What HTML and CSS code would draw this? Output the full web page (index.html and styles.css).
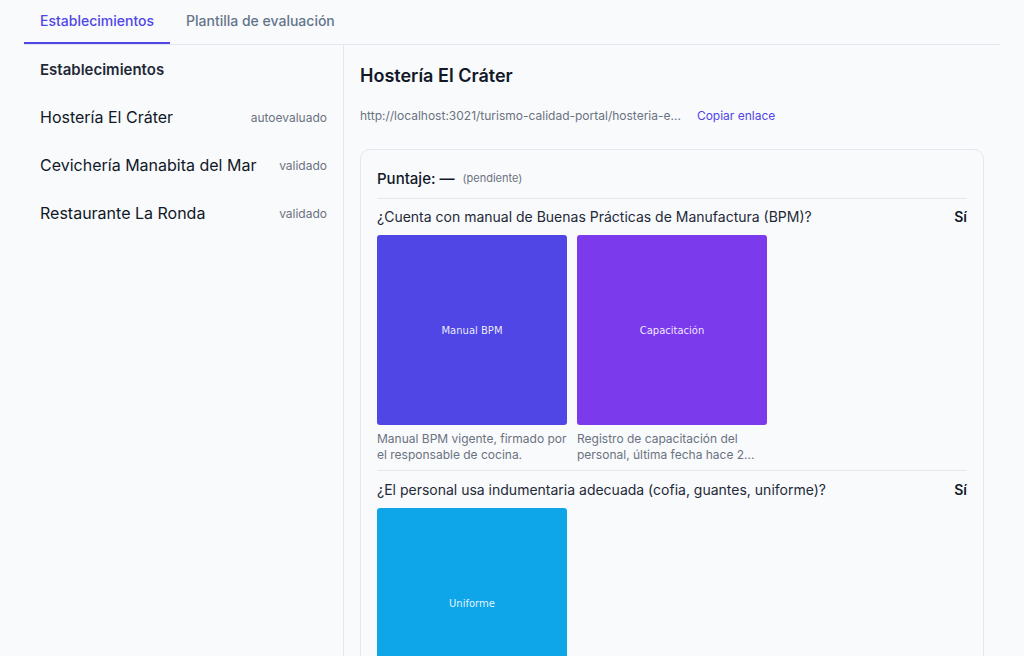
FILE: index.html
```html
<!DOCTYPE html>
<html lang="es">
<head>
  <meta charset="UTF-8" />
  <meta name="viewport" content="width=device-width, initial-scale=1.0"/>
  <title>Turismo Calidad - Establecimientos</title>
  <link rel="stylesheet" href="styles.css">
</head>
<body>

  <nav class="tabs">
    <a class="tab active">Establecimientos</a>
    <a class="tab">Plantilla de evaluación</a>
  </nav>

  <div class="layout">
    <aside class="sidebar">
      <h3>Establecimientos</h3>
      <ul class="list">
        <li><span class="name">Hostería El Cráter</span><span class="status">autoevaluado</span></li>
        <li><span class="name">Cevichería Manabita del Mar</span><span class="status">validado</span></li>
        <li><span class="name">Restaurante La Ronda</span><span class="status">validado</span></li>
      </ul>
    </aside>

    <main class="detail">
      <h2>Hostería El Cráter</h2>
      <div class="link-row">
        <span class="url">http://localhost:3021/turismo-calidad-portal/hosteria-e...</span>
        <a class="copy">Copiar enlace</a>
      </div>

      <section class="card">
        <div class="score">Puntaje: — <span class="pending">(pendiente)</span></div>

        <div class="question">
          <div class="q-head">
            <span>¿Cuenta con manual de Buenas Prácticas de Manufactura (BPM)?</span>
            <strong>Sí</strong>
          </div>
          <div class="evidence">
            <figure>
              <div class="thumb indigo">Manual BPM</div>
              <figcaption>Manual BPM vigente, firmado por el responsable de cocina.</figcaption>
            </figure>
            <figure>
              <div class="thumb violet">Capacitación</div>
              <figcaption>Registro de capacitación del personal, última fecha hace 2...</figcaption>
            </figure>
          </div>
        </div>

        <div class="question">
          <div class="q-head">
            <span>¿El personal usa indumentaria adecuada (cofia, guantes, uniforme)?</span>
            <strong>Sí</strong>
          </div>
          <div class="evidence">
            <figure>
              <div class="thumb sky">Uniforme</div>
            </figure>
          </div>
        </div>
      </section>
    </main>
  </div>

</body>
</html>
```

FILE: styles.css
```css
body {
  font-family: 'Inter', sans-serif;
  margin: 0;
  background-color: #f8fafc;
  color: #111827;
  overflow: hidden;
}

.tabs {
  display: flex;
  margin: 0 24px;
  border-bottom: 1px solid #e2e8f0;
  height: 44px;
}

.tab {
  padding: 0 16px;
  font-size: 14px;
  font-weight: 500;
  color: #64748b;
  line-height: 42px;
  border-bottom: 2px solid transparent;
}

.tab.active {
  color: #4f46e5;
  border-bottom-color: #4f46e5;
}

.layout {
  display: flex;
  margin: 0 24px;
  height: 611px;
}

.sidebar {
  width: 320px;
  border-right: 1px solid #e2e8f0;
  padding: 14px 16px 0;
  box-sizing: border-box;
}

.sidebar h3 {
  margin: 0 0 12px;
  font-size: 15px;
  font-weight: 600;
  color: #1f2937;
  line-height: 22px;
}

.list {
  list-style: none;
  margin: 0;
  padding: 0;
}

.list li {
  display: flex;
  justify-content: space-between;
  align-items: center;
  height: 48px;
}

.name {
  font-size: 16px;
  color: #111827;
}

.status {
  font-size: 12px;
  color: #6b7280;
}

.detail {
  flex: 1;
  padding: 0 16px;
}

.detail h2 {
  margin: 19px 0 0;
  font-size: 18px;
  font-weight: 600;
  line-height: 24px;
}

.link-row {
  display: flex;
  gap: 16px;
  font-size: 12px;
  margin-top: 20px;
  line-height: 16px;
}

.url {
  color: #6b7280;
}

.copy {
  color: #4f46e5;
}

.card {
  margin-top: 25px;
  border: 1px solid #e2e8f0;
  border-radius: 10px;
  padding: 16px 16px 0;
  height: 600px;
}

.score {
  font-size: 15px;
  font-weight: 500;
  line-height: 24px;
  padding-bottom: 7px;
}

.pending {
  font-size: 11px;
  font-weight: 400;
  color: #6b7280;
  margin-left: 4px;
  vertical-align: 2px;
}

.question {
  border-top: 1px solid #e5e7eb;
  padding: 8px 0 7px;
}

.q-head {
  display: flex;
  justify-content: space-between;
  font-size: 14px;
  color: #1f2937;
  line-height: 20px;
  margin-bottom: 8px;
}

.q-head strong {
  font-weight: 600;
  color: #111827;
}

.evidence {
  display: flex;
  gap: 10px;
}

figure {
  margin: 0;
  width: 190px;
}

.thumb {
  height: 190px;
  border-radius: 3px;
  display: flex;
  align-items: center;
  justify-content: center;
  font-family: 'DejaVu Sans', sans-serif;
  font-size: 10px;
  color: rgba(255, 255, 255, 0.9);
}

.indigo {
  background-color: #4f46e5;
}

.violet {
  background-color: #7c3aed;
}

.sky {
  background-color: #0ea5e9;
}

figcaption {
  font-size: 12px;
  color: #6b7280;
  line-height: 16px;
  margin-top: 6px;
}

.question + .question {
  padding-top: 9px;
}
```
